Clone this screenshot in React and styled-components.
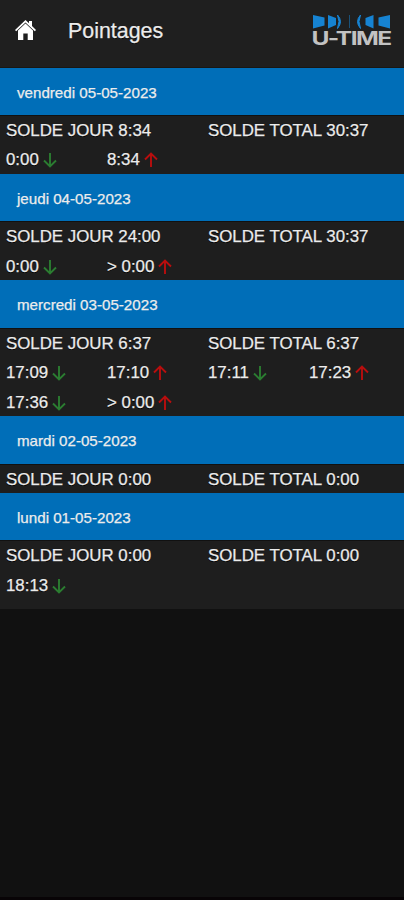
import styled, { createGlobalStyle } from "styled-components";

const GlobalStyle = createGlobalStyle`
  body {
    margin: 0;
    background-color: #111;
    color: #ececec;
    font-family: "Liberation Sans", Arial, sans-serif;
    -webkit-text-stroke: 0.25px;
  }
`;

const Page = styled.div`
  box-sizing: border-box;
  min-height: 900px;
  border-bottom: 3px solid #080406;
  overflow: hidden;
`;

const Header = styled.header`
  display: flex;
  align-items: center;
  box-sizing: border-box;
  height: 67.6px;
  padding: 0 13px 5px 15px;
  border-bottom: 1px solid #191714;
  background-color: #1f1f1f;
`;

const HomeIcon = styled.svg`
  width: 21px;
  height: 20px;
  margin-bottom: 2px;
`;

const Title = styled.h1`
  flex: 1;
  margin: 0 0 0 32px;
  font-size: 21.4px;
  font-weight: normal;
  line-height: 26px;
  text-shadow: 0 1px 0 #000;
`;

const LogoSvg = styled.svg`
  width: 79px;
  height: 36px;
  margin-top: 2px;
  overflow: visible;
`;

const DayTitle = styled.h2`
  box-sizing: border-box;
  height: 47.3px;
  margin: 0;
  padding-left: 17px;
  background-color: #006eb8;
  font-size: 15.15px;
  font-weight: normal;
  line-height: 49px;
`;

const DayContent = styled.div`
  display: grid;
  grid-template-columns: repeat(4, 1fr);
  grid-auto-rows: 29.55px;
  padding-bottom: ${({ $last }) => ($last ? "9px" : "0")};
  background-color: #1e1e1e;
  box-shadow: inset 0 1px 0 #111;
  font-size: 16.85px;
  line-height: 31.5px;
  text-shadow: 0 1px 0 #000;
`;

const Balance = styled.div`
  grid-column: span 2;
  padding-left: 6px;
  white-space: nowrap;
`;

const Punch = styled.div`
  display: flex;
  align-items: center;
  padding: 2px 0 0 6px;
  line-height: 29.5px;
  white-space: nowrap;
`;

const ArrowSvg = styled.svg`
  width: 14px;
  height: 16px;
  margin-left: 4px;
  transform: ${({ $up }) => ($up ? "rotate(180deg)" : "none")};
  stroke: ${({ $up }) => ($up ? "#b90e0e" : "#2b7d31")};
`;

const Arrow = ({ up }) => (
  <ArrowSvg $up={up} viewBox="0 0 14 16" fill="none" strokeWidth="1.9">
    <path d="M7 1V14.5M1 8.5L7 14.5L13 8.5" />
  </ArrowSvg>
);

const Logo = () => (
  <LogoSvg viewBox="0 0 79 36">
    <g fill="#1683d2">
      <path d="M1 1L12.5 3.5V11.5L1 14.5Z" />
      <path d="M16 1L24 4V11L16 14.5Z" />
      <path d="M25.5 1Q31.5 7.5 25.5 14.5L27 7.5Z" stroke="#1683d2" />
      <path d="M37 1H38V14H37Z" opacity="0.5" />
      <path d="M48.5 1Q42.5 7.5 48.5 14.5L47 7.5Z" stroke="#1683d2" />
      <path d="M61.5 1L53.5 4V11L61.5 14.5Z" />
      <path d="M78 1L66.5 3.5V11.5L78 14.5Z" />
    </g>
    <text
      x="-0.5"
      y="31"
      fill="#c2c2c2"
      fontFamily="Inter, sans-serif"
      fontSize="18.5"
      fontWeight="700"
      letterSpacing="-1.2"
      textLength="79"
      lengthAdjust="spacingAndGlyphs"
    >
      U-TIME
    </text>
  </LogoSvg>
);

const days = [
  {
    date: "vendredi 05-05-2023",
    day: "8:34",
    total: "30:37",
    punches: ["0:00", "8:34"],
  },
  {
    date: "jeudi 04-05-2023",
    day: "24:00",
    total: "30:37",
    punches: ["0:00", "> 0:00"],
  },
  {
    date: "mercredi 03-05-2023",
    day: "6:37",
    total: "6:37",
    punches: ["17:09", "17:10", "17:11", "17:23", "17:36", "> 0:00"],
  },
  { date: "mardi 02-05-2023", day: "0:00", total: "0:00", punches: [] },
  { date: "lundi 01-05-2023", day: "0:00", total: "0:00", punches: ["18:13"] },
];

export default function App() {
  return (
    <Page>
      <GlobalStyle />
      <Header>
        <HomeIcon viewBox="0 0 21 20" fill="#fff">
          <path d="M10.5 0L14 3.2V1H17V6L21 10L19.8 11.2L10.5 2.6L1.2 11.2L0 10Z" />
          <path d="M10.5 3.4L18 10.5V20H12.7V13.5H8.3V20H3V10.5Z" />
        </HomeIcon>
        <Title>Pointages</Title>
        <Logo />
      </Header>
      {days.map(({ date, day, total, punches }, index) => (
        <section key={date}>
          <DayTitle>{date}</DayTitle>
          <DayContent $last={index === days.length - 1}>
            <Balance>SOLDE JOUR {day}</Balance>
            <Balance>SOLDE TOTAL {total}</Balance>
            {/* punches alternate between in and out */}
            {punches.map((time, i) => (
              <Punch key={i}>
                {time}
                <Arrow up={i % 2 === 1} />
              </Punch>
            ))}
          </DayContent>
        </section>
      ))}
    </Page>
  );
}
